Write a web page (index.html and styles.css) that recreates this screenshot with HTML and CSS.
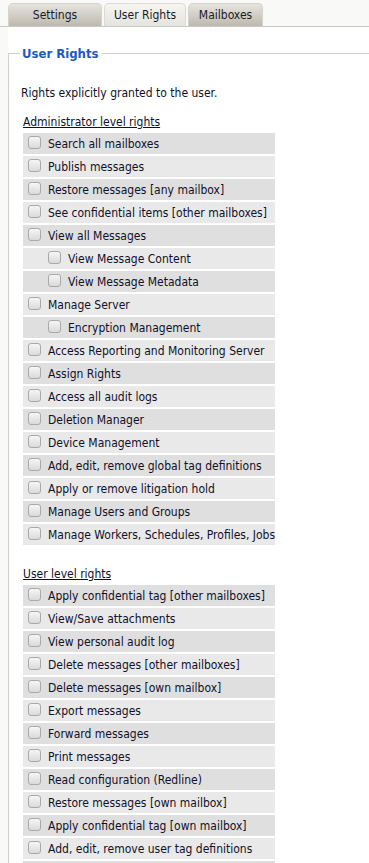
FILE: index.html
```html
<!DOCTYPE html>
<html lang="en">

<head>
  <meta charset="UTF-8">
  <meta name="viewport" content="width=device-width, initial-scale=1.0">
  <title>User Rights</title>

  <link rel="stylesheet" href="styles.css">
</head>

<body>
  <div class="tabs">
    <a class="tab" href="#">Settings</a>
    <a class="tab active" href="#">User Rights</a>
    <a class="tab" href="#">Mailboxes</a>
  </div>

  <div class="panel">
    <fieldset class="rights">
      <legend>User Rights</legend>
      <p class="intro">Rights explicitly granted to the user.</p>

      <p class="group-title">Administrator level rights</p>
      <ul class="rights-list">
        <li class="right"><span class="check"></span>Search all mailboxes</li>
        <li class="right"><span class="check"></span>Publish messages</li>
        <li class="right"><span class="check"></span>Restore messages [any mailbox]</li>
        <li class="right"><span class="check"></span>See confidential items [other mailboxes]</li>
        <li class="right"><span class="check"></span>View all Messages</li>
        <li class="right sub"><span class="check"></span>View Message Content</li>
        <li class="right sub"><span class="check"></span>View Message Metadata</li>
        <li class="right"><span class="check"></span>Manage Server</li>
        <li class="right sub"><span class="check"></span>Encryption Management</li>
        <li class="right"><span class="check"></span>Access Reporting and Monitoring Server</li>
        <li class="right"><span class="check"></span>Assign Rights</li>
        <li class="right"><span class="check"></span>Access all audit logs</li>
        <li class="right"><span class="check"></span>Deletion Manager</li>
        <li class="right"><span class="check"></span>Device Management</li>
        <li class="right"><span class="check"></span>Add, edit, remove global tag definitions</li>
        <li class="right"><span class="check"></span>Apply or remove litigation hold</li>
        <li class="right"><span class="check"></span>Manage Users and Groups</li>
        <li class="right"><span class="check"></span>Manage Workers, Schedules, Profiles, Jobs</li>
      </ul>

      <p class="group-title">User level rights</p>
      <ul class="rights-list">
        <li class="right"><span class="check"></span>Apply confidential tag [other mailboxes]</li>
        <li class="right"><span class="check"></span>View/Save attachments</li>
        <li class="right"><span class="check"></span>View personal audit log</li>
        <li class="right"><span class="check"></span>Delete messages [other mailboxes]</li>
        <li class="right"><span class="check"></span>Delete messages [own mailbox]</li>
        <li class="right"><span class="check"></span>Export messages</li>
        <li class="right"><span class="check"></span>Forward messages</li>
        <li class="right"><span class="check"></span>Print messages</li>
        <li class="right"><span class="check"></span>Read configuration (Redline)</li>
        <li class="right"><span class="check"></span>Restore messages [own mailbox]</li>
        <li class="right"><span class="check"></span>Apply confidential tag [own mailbox]</li>
        <li class="right"><span class="check"></span>Add, edit, remove user tag definitions</li>
        <li class="right"></li>
      </ul>
    </fieldset>
  </div>
</body>

</html>
```

FILE: styles.css
```css
/* document */
* {
  box-sizing: border-box;
}

html {
  overflow: hidden;
}

body {
  margin: 0;
  background: #f9f9f7;
  font-family: "DejaVu Sans Condensed", "DejaVu Sans", sans-serif;
  font-size: 12px;
  color: #10102a;
}

/* tab strip */
.tabs {
  display: flex;
  gap: 2px;
  height: 27px;
  padding: 3px 0 0 8px;
  border-bottom: 1px solid #c9c9c6;
}

.tab {
  display: block;
  height: 23px;
  line-height: 22px;
  text-align: center;
  text-decoration: none;
  color: #1a1a2a;
  border: 1px solid #d6d3cc;
  border-bottom: none;
  border-radius: 5px 5px 0 0;
  background: linear-gradient(#e6e4de, #bdb9ae);
}

.tab:nth-child(1) {
  width: 94px;
}

.tab:nth-child(2) {
  width: 82px;
}

.tab:nth-child(3) {
  width: 75px;
}

.tab.active {
  background: linear-gradient(#f6f5f1, #e5e3dd);
  border-color: #dcdad4;
}

/* content panel */
.panel {
  margin-left: 8px;
  background: #fff;
  padding-top: 19px;
  min-height: 840px;
}

.rights {
  margin: 0;
  padding: 0 0 0 12px;
  border: 1px solid #cfcfcf;
  border-right: none;
  border-bottom: none;
}

.rights legend {
  padding: 0 2px;
  margin-left: -1px;
  font-weight: bold;
  font-size: 13px;
  color: #2059c2;
}

.intro {
  margin: 25px 0 0 0;
  line-height: 15px;
}

.group-title {
  margin: 14px 0 3px 2px;
  line-height: 15px;
  text-decoration: underline;
}

.rights-list {
  list-style: none;
  margin: 0 0 0 2px;
  padding: 0;
  width: 252px;
}

.rights-list + .group-title {
  margin-top: 22px;
}

.right {
  display: flex;
  align-items: center;
  height: 21px;
  margin-bottom: 2px;
  padding-left: 5px;
  white-space: nowrap;
  overflow: hidden;
  background: #dfdfdf;
}

.right:nth-child(even) {
  background: #e9e9e9;
}

.right.sub {
  padding-left: 25px;
}

/* checkbox */
.check {
  flex: none;
  width: 13px;
  height: 13px;
  margin: -2px 7px 0 0;
  border: 1px solid #a9a9a9;
  border-radius: 3px;
  background: linear-gradient(#f6f6f6, #dadada);
}
```
